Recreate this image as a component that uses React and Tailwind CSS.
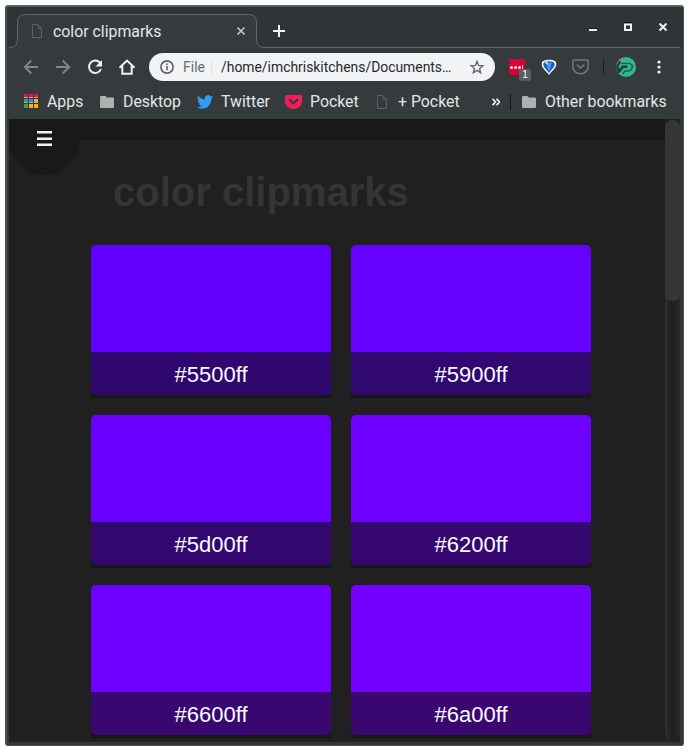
const ROBOTO = "font-['Roboto','Liberation_Sans',sans-serif]";

const swatches = [
  { name: '#5500ff', top: 'bg-[#6200ff]', foot: 'bg-[#2f076f]' },
  { name: '#5900ff', top: 'bg-[#6600ff]', foot: 'bg-[#310770]' },
  { name: '#5d00ff', top: 'bg-[#6900ff]', foot: 'bg-[#330770]' },
  { name: '#6200ff', top: 'bg-[#6d00ff]', foot: 'bg-[#360770]' },
  { name: '#6600ff', top: 'bg-[#7000ff]', foot: 'bg-[#380771]' },
  { name: '#6a00ff', top: 'bg-[#7400ff]', foot: 'bg-[#3a0771]' },
];

function Page() {
  return (
    <svg width="12" height="16" viewBox="0 0 12 16" fill="none" stroke="#5d6162" strokeWidth="1" className="block shrink-0">
      <path d="M1.5 1.5h5.5l3.500 4v9h-9zM7 1.500v4h3.500" />
    </svg>
  );
}

function Folder() {
  return (
    <svg width="14" height="12" viewBox="0 0 14 12" className="block shrink-0">
      <path d="M1.2 0H5.5L7 1.5h5.8q1.2 0 1.2 1.2v8.1q0 1.2-1.2 1.2H1.2Q0 12 0 10.8V1.2Q0 0 1.2 0z" fill="#b0b0b0" />
    </svg>
  );
}

function TitleBar() {
  return (
    <div className="relative h-[41px] w-full shrink-0">
      <svg width="675" height="41" viewBox="7 7 675 41" className="absolute left-0 top-0 block">
        <path d="M7 48V47.500h2q8.500 0 8.500-8V22.500q0-8 8-8h223q8 0 8 8v17q0 8 8 8h417v.5z" fill="#353b3c" />
        <path d="M9 47.500q8.500 0 8.500-8V22.500q0-8 8-8h223q8 0 8 8v17q0 8 8 8h416" fill="none" stroke="#63686a" />
      </svg>
      <div className="relative flex h-full items-center">
        <div className="ml-[24px] mt-[7px]"><Page /></div>
        <span className="ml-[10px] mt-[8px] w-[183px] text-[15.850px] leading-5 text-[#e4e5e5]">color clipmarks</span>
        <svg width="10" height="10" viewBox="0 0 10 10" className="mt-[7px] block" stroke="#c3c5c5" strokeWidth="1.7">
          <path d="M1.500 1.500l7 7M8.500 1.500l-7 7" />
        </svg>
        <svg width="12" height="12" viewBox="0 0 12 12" className="ml-[27px] mt-[7px] block" stroke="#f4f4f4" strokeWidth="2">
          <path d="M0 6h12M6 0v12" />
        </svg>
        <svg width="80" height="12" viewBox="588 21 80 12" className="-mt-[1px] ml-[303px] block" fill="none" stroke="#f1f1f0">
          <path d="M589 28.500h8M624 22.500h8M659 22.500h2M665 22.500h2" stroke="#151818" strokeWidth="1" />
          <path d="M589 30h8" strokeWidth="2" />
          <path d="M625 24.500h6v5.500h-6z" strokeWidth="2" />
          <path d="M659.500 23.500l7 7M666.500 23.500l-7 7" strokeWidth="2" />
        </svg>
      </div>
    </div>
  );
}

function Toolbar() {
  return (
    <div className="flex h-[38px] w-full shrink-0 items-center">
      <svg width="114" height="20" viewBox="22 57 114 20" className="ml-[15px] block shrink-0" fill="none">
        <g stroke="#818687" strokeWidth="1.800">
          <path d="M38 67H25M31.300 60.500L24.800 67l6.500 6.500" />
          <path d="M56 67h13M62.700 60.500l6.500 6.500-6.500 6.500" />
        </g>
        <path d="M99.900 62.700A6.200 6.200 0 1 0 101 69" stroke="#f1f1ef" strokeWidth="2" />
        <path d="M102 60v6.500h-6.500z" fill="#f1f1ef" />
        <path d="M119.500 67.800l7.500-7.200 7.500 7.200M122.300 66v7.800h9.400V66" stroke="#f1f1ef" strokeWidth="2" />
      </svg>
      <div className="ml-[13px] flex h-7 w-[346px] shrink-0 items-center rounded-full bg-[#f1f3f5]">
        <svg width="14" height="14" viewBox="0 0 14 14" className="ml-[11px] block shrink-0" fill="none" stroke="#5b5f63" strokeWidth="1.600">
          <circle cx="7" cy="7" r="6.100" /><path d="M7 6v4.300M7 3.500v1.500" />
        </svg>
        <span className="-mt-px ml-[9px] w-[28px] text-[14px] leading-5 text-[#686c70]">File</span>
        <span className="h-4 w-px bg-[#dfe3e8]" />
        <span className="-mt-px ml-[9px] w-[240px] whitespace-nowrap text-[13.900px] leading-5 text-[#27292c]">/home/imchriskitchens/Documents…</span>
        <svg width="16" height="16" viewBox="0 0 16 16" className="ml-[8px] block shrink-0" fill="none" stroke="#64676c" strokeWidth="1.400">
          <path d="M8 2.400l1.600 4 4.300.3-3.300 2.800 1 4.200L8 11.400l-3.600 2.300 1-4.200-3.300-2.800 4.300-.3z" />
        </svg>
      </div>
      <div className="relative ml-[14px] h-6 w-[22px] shrink-0">
        <div className="mt-[4px] flex h-4 w-4 items-center gap-px bg-[#d60634] pl-px">
          <i className="size-[3px] rounded-full bg-[#ffdbe2]" /><i className="size-[3px] rounded-full bg-[#ffdbe2]" /><i className="size-[3px] rounded-full bg-[#ffdbe2]" /><i className="h-[4px] w-px bg-[#ffb4c1]" />
        </div>
        <span className="absolute left-[10px] top-[14px] flex h-[12px] w-[12px] items-center justify-center rounded-[2px] bg-[#5b5e60] font-['Liberation_Sans',sans-serif] text-[10px] leading-none text-white">1</span>
      </div>
      <svg width="16" height="17" viewBox="0 0 16 17" className="ml-[10px] block shrink-0">
        <path d="M8 16C5.500 12 .7 9.500.7 5.200C.7 2 3.600.8 8 .8s7.300 1.200 7.300 4.400C15.300 9.500 10.500 12 8 16z" fill="#f4f8fc" />
        <path d="M8 14.300C6.300 11 2.300 8.500 2.300 5.300Q2.300 2.300 8 2.300t5.700 3C13.700 8.500 9.700 11 8 14.300z" fill="#1c5fb8" />
        <path d="M5.500 2.800Q8 5 10.500 2.800Q10 8 8 13Q6 8 5.500 2.800z" fill="#4f9be8" />
        <path d="M4 3.300Q5.500 2.500 7 2.700L6.500 6Q4 5 4 3.300z" fill="#b9dbf8" />
      </svg>
      <svg width="17" height="16" viewBox="0 0 17 16" className="ml-[15px] block shrink-0" fill="none" stroke="#737879" strokeWidth="1.500">
        <path d="M1.800 1h13.400q1 0 1 1v5.300c0 10-15.400 10-15.400 0V2q0-1 1-1zM4.800 5.500l3.700 3.600 3.700-3.600" />
      </svg>
      <span className="ml-[14px] h-4 w-px bg-[#161c1f]" />
      <svg width="20" height="20" viewBox="0 0 20 20" className="ml-[12px] block shrink-0">
        <circle cx="10" cy="10" r="10" fill="#30b896" />
        <path d="M0 9.500L3.500 3 5 5 2.500 10 5 14 2.500 16.500Q0 13.500 0 9.500z" fill="#263b39" />
        <path d="M5 6.500h9l2.500 2-1 4-2.500 1.500H9L6.500 17" fill="none" stroke="#235c50" strokeWidth="1.600" />
        <path d="M6 8.500h6l-1 2.500H7.500L4 15.500 3 13z" fill="#253c3b" />
        <path d="M3 3.500L5.500 2" stroke="#b3852d" strokeWidth="1.500" />
      </svg>
      <svg width="4" height="14" viewBox="0 0 4 14" className="ml-[21px] block shrink-0" fill="#f1f1ef">
        <circle cx="2" cy="2" r="1.600" /><circle cx="2" cy="7" r="1.600" /><circle cx="2" cy="12" r="1.600" />
      </svg>
    </div>
  );
}

function Bookmarks() {
  return (
    <div className="flex h-[33px] w-full shrink-0 items-center whitespace-nowrap pb-[1px] text-[15.850px] leading-5 text-[#e4e5e5]">
      <svg width="14" height="14" viewBox="0 0 14 14" className="-mt-[2px] ml-[17px] block shrink-0" shapeRendering="crispEdges">
        <path d="M0 0h4v3H0zM5 0h4v3H5zM10 0h4v3h-4z" fill="#f50c49" />
        <path d="M0 3h4v1H0zM5 3h4v1H5zM10 3h4v1h-4zM0 8h4v1H0zM5 8h4v1H5zM10 8h4v1h-4z" fill="#aeb0aa" />
        <path d="M0 5h4v3H0zM0 10h4v4H0z" fill="#31a457" /><path d="M5 5h4v3H5z" fill="#4285f4" /><path d="M10 5h4v3h-4zM5 10h4v4H5zM10 10h4v4h-4z" fill="#fbb012" />
      </svg>
      <span className="ml-[9px] w-[53px]">Apps</span>
      <Folder />
      <span className="ml-[9px] w-[74px]">Desktop</span>
      <svg width="16" height="14" viewBox="0 2 24 20" preserveAspectRatio="none" className="block shrink-0" fill="#2e9cf0">
        <path d="M23.950 4.570a10 10 0 0 1-2.820.780 4.960 4.960 0 0 0 2.160-2.730 9.900 9.900 0 0 1-3.120 1.190 4.920 4.920 0 0 0-8.390 4.480A13.970 13.970 0 0 1 1.640 3.160a4.920 4.920 0 0 0 1.520 6.570 4.900 4.900 0 0 1-2.230-.610v.06a4.920 4.920 0 0 0 3.950 4.830 5 5 0 0 1-2.210.080 4.940 4.940 0 0 0 4.600 3.420A9.870 9.870 0 0 1 0 19.540a13.990 13.990 0 0 0 7.550 2.210c9.050 0 14-7.500 14-13.980v-.640a9.940 9.940 0 0 0 2.400-2.560z" />
      </svg>
      <span className="ml-[8px] w-[64px]">Twitter</span>
      <svg width="17" height="14" viewBox="0 0 17 14" className="block shrink-0">
        <path d="M1.500 0h14Q17 0 17 1.500V6C17 16.500 0 16.500 0 6V1.500Q0 0 1.500 0z" fill="#f21c59" />
        <path d="M4.700 4.800l3.800 3.600 3.800-3.600" fill="none" stroke="#313839" strokeWidth="2" strokeLinecap="round" />
      </svg>
      <span className="ml-[8px] w-[66px]">Pocket</span>
      <Page />
      <span className="ml-[10px] w-[94px]">+ Pocket</span>
      <svg width="8" height="8" viewBox="0 0 8 8" className="-mt-px block shrink-0" fill="none" stroke="#f1f1ef" strokeWidth="1.700">
        <path d="M.5 .7L3.500 4l-3 3.300M4.500 .7L7.500 4l-3 3.300" />
      </svg>
      <span className="ml-[10px] mr-[11px] h-4 w-px bg-[#15191b]" />
      <Folder />
      <span className="ml-[9px]">Other bookmarks</span>
    </div>
  );
}

function Swatch({ name, top, foot }) {
  return (
    <div className="h-[153px] w-[240px] bg-[linear-gradient(to_bottom,transparent_147px,#171717_147px)]">
      <div className="flex h-[150px] flex-col overflow-hidden rounded-[5px]">
        <div className={`h-[107px] ${top}`} />
        <div className={`flex h-[43px] items-center justify-center pt-[2px] text-[22px] leading-none text-[#fcfbfe] ${foot}`}>{name}</div>
      </div>
    </div>
  );
}

export default function App() {
  return (
    <main className="h-[755px] w-[693px] overflow-hidden bg-white pl-[5px] pt-[5px]">
      <div className="h-[741px] w-[679px] overflow-hidden rounded-[3px] border-t-2 border-r border-b border-l-2 border-t-[#5b6163] border-r-[#4b5052] border-b-[#4b5052] border-l-[#4b5052] bg-[#2f3436]">
        <div className={`flex h-[112px] flex-col ${ROBOTO}`}>
          <TitleBar />
          <div className="h-[71px] bg-[#353b3c]">
            <Toolbar />
            <Bookmarks />
          </div>
        </div>
        <div className="h-[626px] border-b-[3px] border-l-2 border-r-[3px] border-[#303737]">
          <div className="relative flex h-full overflow-hidden bg-[#202020] font-['Liberation_Sans',Arial,sans-serif]">
            <div className="w-[656px]">
              <header className="h-[21px] border-t border-[#151515] bg-[#191919]">
                <div className="absolute -top-[14px] left-0 size-[70px] rounded-full bg-[#191919]" />
                <div className="relative flex h-[37px] w-[71px] flex-col items-center justify-center gap-[3px]">
                  <i className="h-[3px] w-[15px] border-b border-[#8a8a8a] bg-[#f2f2f2]" />
                  <i className="h-[3px] w-[15px] border-t border-[#8a8a8a] bg-[#f2f2f2]" />
                  <i className="h-[3px] w-[15px] border-t border-[#8a8a8a] bg-[#f2f2f2]" />
                </div>
              </header>
              <h1 className="ml-[104px] mt-[29px] h-[76px] text-[40px] font-bold leading-[46px] text-[#353535]">color clipmarks</h1>
              <div className="ml-[82px] grid w-[500px] grid-cols-2 gap-x-5 gap-y-[17px]">
                {swatches.map((s) => <Swatch key={s.name} {...s} />)}
              </div>
            </div>
            <div className="h-full w-[15px] pt-px">
              <div className="h-[622px] rounded-[8px] bg-[linear-gradient(to_right,#303030,#212121_35%,#212121_60%,#2b2b2b)]">
                <div className="h-[181px] rounded-[7px] bg-[#363636]" />
              </div>
            </div>
          </div>
        </div>
      </div>
    </main>
  );
}
